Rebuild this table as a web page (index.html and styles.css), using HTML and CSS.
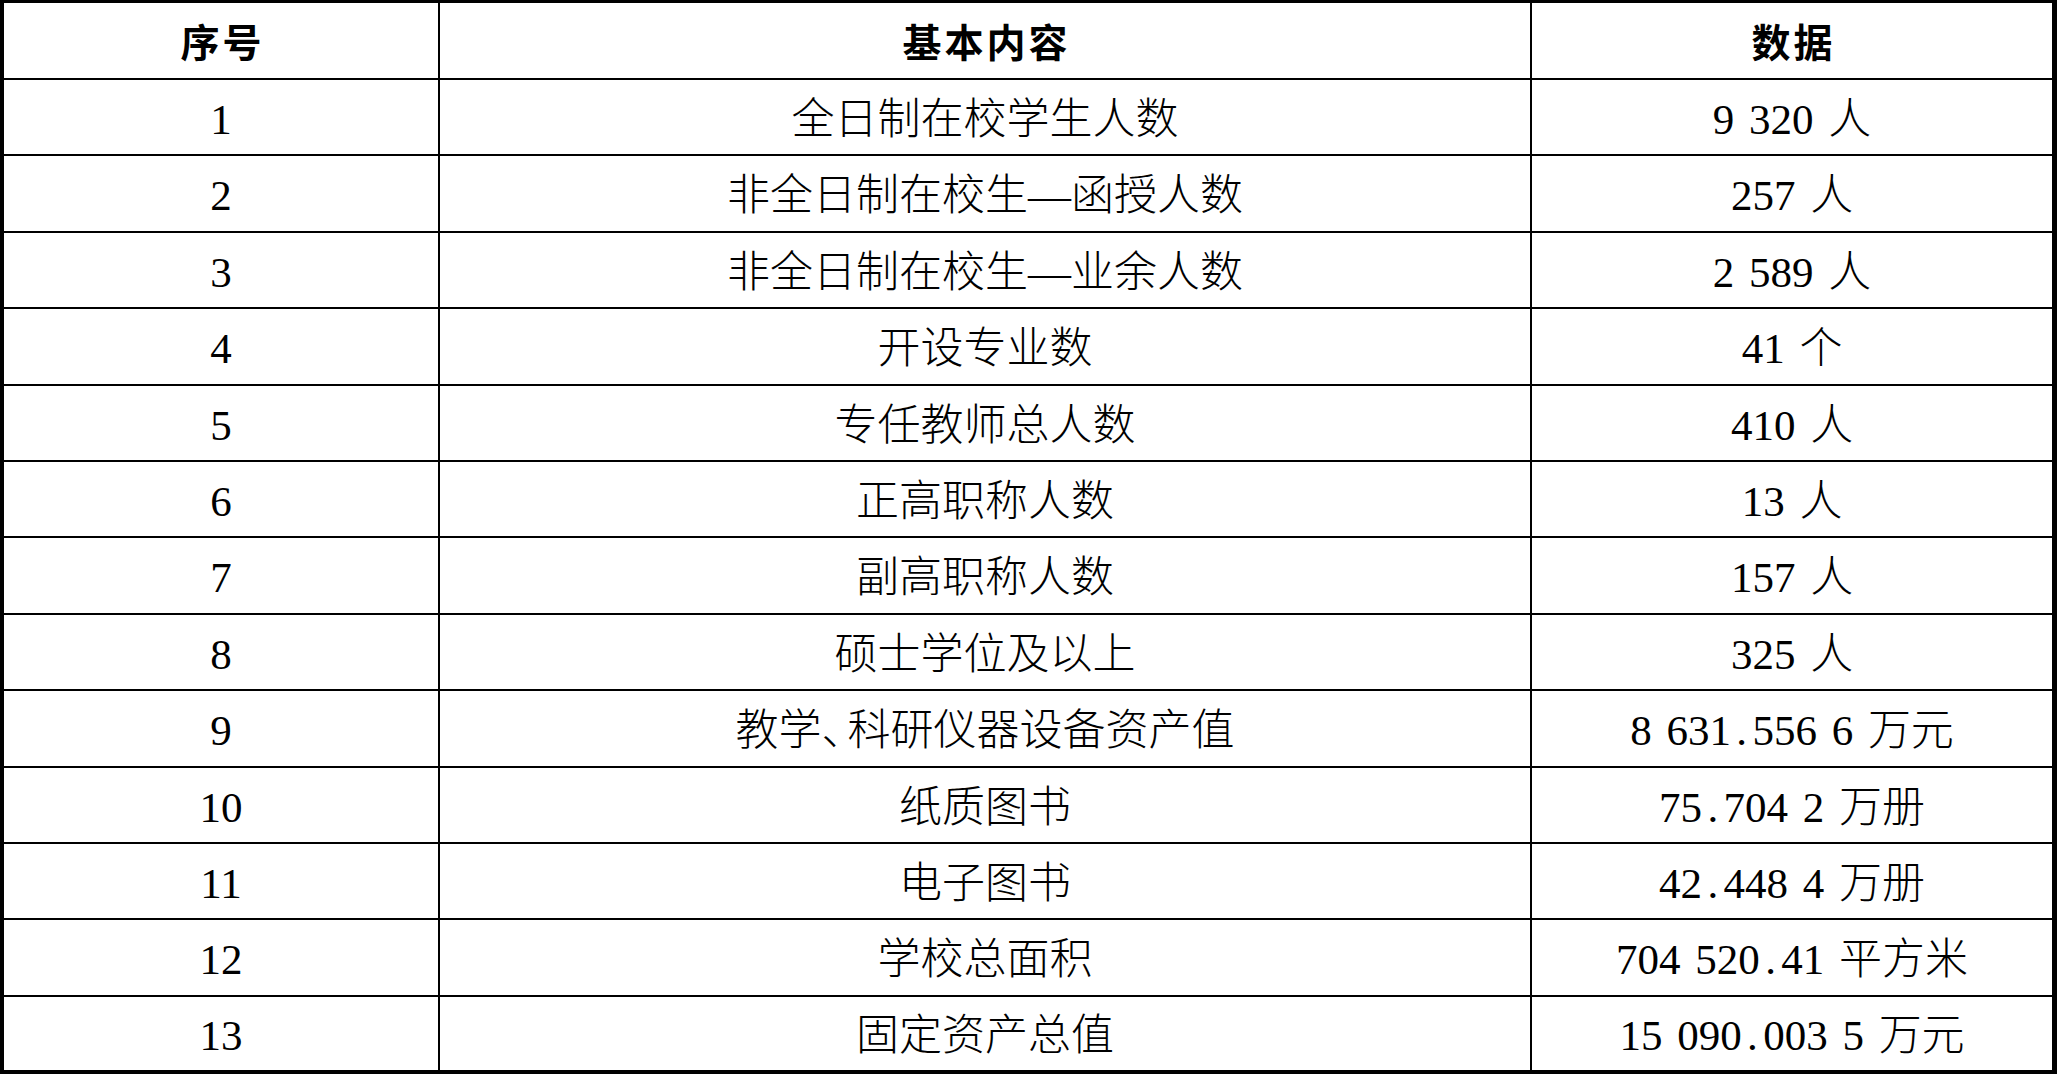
FILE: index.html
```html
<!DOCTYPE html>
<html lang="zh-CN">
<head>
<meta charset="utf-8">
<title>基本内容数据表</title>
<link rel="stylesheet" href="styles.css">
</head>
<body>
<div class="sheet">
  <div class="cell head">序号</div>
  <div class="cell head">基本内容</div>
  <div class="cell head">数据</div>

  <div class="cell num">1</div>
  <div class="cell txt">全日制在校学生人数</div>
  <div class="cell val">9 320 人</div>

  <div class="cell num">2</div>
  <div class="cell txt">非全日制在校生—函授人数</div>
  <div class="cell val">257 人</div>

  <div class="cell num">3</div>
  <div class="cell txt">非全日制在校生—业余人数</div>
  <div class="cell val">2 589 人</div>

  <div class="cell num">4</div>
  <div class="cell txt">开设专业数</div>
  <div class="cell val">41 个</div>

  <div class="cell num">5</div>
  <div class="cell txt">专任教师总人数</div>
  <div class="cell val">410 人</div>

  <div class="cell num">6</div>
  <div class="cell txt">正高职称人数</div>
  <div class="cell val">13 人</div>

  <div class="cell num">7</div>
  <div class="cell txt">副高职称人数</div>
  <div class="cell val">157 人</div>

  <div class="cell num">8</div>
  <div class="cell txt">硕士学位及以上</div>
  <div class="cell val">325 人</div>

  <div class="cell num">9</div>
  <div class="cell txt">教学<span class="comma">、</span>科研仪器设备资产值</div>
  <div class="cell val">8 631<span class="dot">.</span>556 6 万元</div>

  <div class="cell num">10</div>
  <div class="cell txt">纸质图书</div>
  <div class="cell val">75<span class="dot">.</span>704 2 万册</div>

  <div class="cell num">11</div>
  <div class="cell txt">电子图书</div>
  <div class="cell val">42<span class="dot">.</span>448 4 万册</div>

  <div class="cell num">12</div>
  <div class="cell txt">学校总面积</div>
  <div class="cell val">704 520<span class="dot">.</span>41 平方米</div>

  <div class="cell num">13</div>
  <div class="cell txt">固定资产总值</div>
  <div class="cell val">15 090<span class="dot">.</span>003 5 万元</div>
</div>
</body>
</html>
```

FILE: styles.css
```css
html, body {
  margin: 0;
  padding: 0;
  background: #ffffff;
}

body {
  width: 2057px;
  height: 1074px;
  overflow: hidden;
}

.sheet {
  display: grid;
  grid-template-columns: 434px 1090px 520px;
  grid-template-rows: 75px 74px 75px 74px 75px 74px 74px 75px 74px 75px 74px 74px 75px 73px;
  gap: 2px;
  width: fit-content;
  background: #000000;
  border-style: solid;
  border-color: #000000;
  border-width: 3px 5px 4px 4px;
}

.cell {
  display: flex;
  align-items: center;
  justify-content: center;
  background: #ffffff;
  color: #000000;
  font-family: "Liberation Serif", "Noto Sans CJK SC", serif;
  font-size: 43px;
  font-weight: 300;
  line-height: 1;
  white-space: pre;
  padding-top: 4px;
  box-sizing: border-box;
}

.head {
  font-family: "Noto Sans CJK SC", sans-serif;
  font-weight: 700;
  font-size: 39px;
  letter-spacing: 3px;
  padding-top: 0;
  padding-left: 3px;
}

.val {
  word-spacing: 4px;
}

.dot {
  display: inline-block;
  width: 0.5em;
  text-align: center;
}

.comma {
  letter-spacing: -0.45em;
  margin-right: 0.05em;
}
```
